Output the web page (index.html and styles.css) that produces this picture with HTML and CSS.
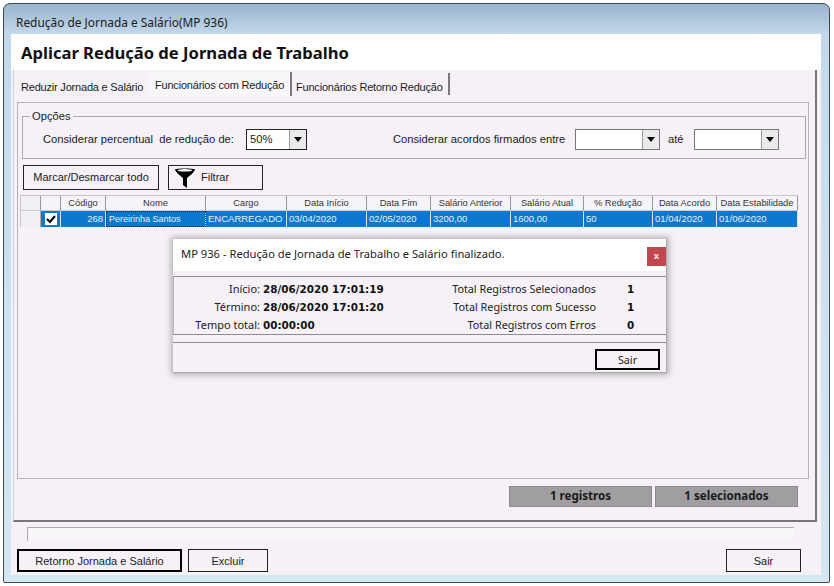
FILE: index.html
```html
<!DOCTYPE html>
<html lang="pt">
<head>
<meta charset="utf-8">
<title>Redução de Jornada e Salário</title>
<link rel="stylesheet" href="styles.css">
</head>
<body>
<div class="window">
  <div class="titlebar">Redução de Jornada e Salário(MP 936)</div>
  <div class="client">
    <div class="header"><h1>Aplicar Redução de Jornada de Trabalho</h1></div>
    <div class="workarea">
      <div class="tabs">
        <span class="tab t1">Reduzir Jornada e Salário</span>
        <span class="tab t2 active">Funcionários com Redução</span>
        <span class="tab t3">Funcionários Retorno Redução</span>
      </div>
      <div class="panel">
        <div class="group">
          <span class="legend">Opções</span>
          <span class="lbl l1">Considerar percentual&nbsp; de redução de:</span>
          <span class="combo c1"><span class="val">50%</span><span class="arrow"></span></span>
          <span class="lbl l2">Considerar acordos firmados entre</span>
          <span class="combo c2 soft"><span class="val"></span><span class="arrow"></span></span>
          <span class="lbl l3">até</span>
          <span class="combo c2 soft"><span class="val"></span><span class="arrow"></span></span>
        </div>
        <div class="actions">
          <button class="btn mark">Marcar/Desmarcar todo</button>
          <button class="btn filter">
            <svg width="22" height="22" viewBox="0 0 22 22"><path d="M1 2.5C1 1 21 1 21 2.5C21 4 17 8 13 11V21L9 18V11C5 8 1 4 1 2.5Z" fill="#000"/><ellipse cx="11" cy="3.3" rx="7.5" ry="1.3" fill="#fff"/></svg>
            <span class="filter-label">Filtrar</span>
          </button>
        </div>
        <div class="grid">
          <div class="row head">
            <span class="w-rh"></span><span class="w-ck"></span><span class="w-cod">Código</span><span class="w-nom">Nome</span><span class="w-car">Cargo</span><span class="w-di">Data Início</span><span class="w-df">Data Fim</span><span class="w-sa">Salário Anterior</span><span class="w-st">Salário Atual</span><span class="w-pc">% Redução</span><span class="w-da">Data Acordo</span><span class="w-de">Data Estabilidade</span>
          </div>
          <div class="row data">
            <span class="w-rh"></span><span class="w-ck"><i class="check"><svg width="10" height="10" viewBox="0 0 10 10"><path d="M1 5L4 8L9 2" fill="none" stroke="#000" stroke-width="2"/></svg></i></span><span class="w-cod num">268</span><span class="w-nom sel">Pereirinha Santos</span><span class="w-car">ENCARREGADO</span><span class="w-di">03/04/2020</span><span class="w-df">02/05/2020</span><span class="w-sa">3200,00</span><span class="w-st">1600,00</span><span class="w-pc">50</span><span class="w-da">01/04/2020</span><span class="w-de">01/06/2020</span>
          </div>
        </div>
        <div class="status">
          <span class="pill">1 registros</span>
          <span class="pill">1 selecionados</span>
        </div>
      </div>
    </div>
    <div class="progress"></div>
    <div class="footer">
      <button class="btn retorno">Retorno Jornada e Salário</button>
      <button class="btn excluir">Excluir</button>
      <button class="btn sair">Sair</button>
    </div>
  </div>
</div>

<div class="dialog">
  <div class="dlg-head">
    <span>MP 936 - Redução de Jornada de Trabalho e Salário finalizado.</span>
    <span class="close">x</span>
  </div>
  <div class="dlg-body">
    <span class="k">Início:</span><b>28/06/2020 17:01:19</b><span class="t">Total Registros Selecionados</span><b class="n">1</b>
    <span class="k">Término:</span><b>28/06/2020 17:01:20</b><span class="t">Total Registros com Sucesso</span><b class="n">1</b>
    <span class="k">Tempo total:</span><b>00:00:00</b><span class="t">Total Registros com Erros</span><b class="n">0</b>
  </div>
  <div class="dlg-foot"><button class="btn dlg-sair">Sair</button></div>
</div>
</body>
</html>
```
FILE: styles.css
```css
* { box-sizing: border-box; }
html, body { margin: 0; padding: 0; }
body { width: 834px; height: 586px; background: #fff; padding: 3px 4px 0 3px; overflow: hidden; font-family: "Liberation Sans", Arial, sans-serif; color: #1c1c1c; position: relative; }
.window { width: 827px; height: 580px; border: 1px solid #3d4a52; border-radius: 7px 7px 2px 2px; background: linear-gradient(#98b5d0 0, #c3d7e9 30px, #c6dcee 100px, #d5e6f3 100%); display: flex; flex-direction: column; }
.titlebar { height: 30px; flex: none; padding: 9px 0 0 12px; font: 11.9px/18px "Noto Sans", sans-serif; color: #1c1c1c; }
.client { flex: 1; margin: 0 8px 7px 7px; background: #f5f1f6; display: flex; flex-direction: column; min-height: 0; }
.header { height: 36px; flex: none; background: #fff; padding: 0 0 0 10px; }
h1 { margin: 0; font: bold 16.6px/37px "Noto Sans", sans-serif; color: #111; white-space: nowrap; }
.workarea { height: 452px; flex: none; margin: 0 4px 0 2px; border-right: 2px solid #777; border-bottom: 2px solid #777; border-left: 1px solid #c5d4e0; padding: 2px 6px 0 3px; display: flex; flex-direction: column; }
.tabs { height: 24px; flex: none; display: flex; font-size: 11px; letter-spacing: -0.2px; }
.tab { display: block; line-height: 30px; white-space: nowrap; }
.t1 { width: 132px; padding-left: 4px; }
.t2 { width: 143px; padding-left: 6px; line-height: 26px; background: #f9f6fa; border-right: 2px solid #777; }
.t3 { width: 158px; padding-left: 4px; border-right: 2px solid #777; height: 22px; margin-top: 1px; line-height: 28px; }
.panel { height: 377px; margin-top: 6px; flex: none; border: 1px solid #b5b2b6; padding: 13px 3px 0 4px; display: flex; flex-direction: column; }
.group { height: 43px; flex: none; position: relative; border: 1px solid #aaa; margin-right: -1px; display: flex; align-items: center; padding: 3px 0 0 20px; font-size: 11.2px; }
.legend { position: absolute; left: 7px; top: -7px; padding: 0 2px; background: #f5f1f6; line-height: 13px; }
.lbl { white-space: nowrap; }
.l1 { width: 203px; }
.l2 { width: 182px; margin-left: 86px; }
.l3 { width: 26px; margin-left: 8px; }
.combo { display: flex; height: 21px; background: #fff; border: 1px solid #222; }
.c1 { width: 61px; }
.c2 { width: 85px; }
.soft { border-color: #777; }
.val { flex: 1; padding-left: 3px; line-height: 19px; }
.arrow { width: 17px; border-left: 1px solid #999; background: #ece9ed; position: relative; }
.arrow::after { content: ""; position: absolute; left: 4px; top: 7px; border: 4px solid transparent; border-top: 5px solid #000; border-bottom: 0; }
.actions { height: 25px; margin: 6px 0 0 1px; flex: none; display: flex; gap: 9px; }
.btn { display: block; background: #f5f1f6; border: 1px solid #222; font: 11px "Liberation Sans", Arial, sans-serif; color: #1c1c1c; padding: 0; }
.mark { width: 136px; height: 25px; padding-bottom: 2px; }
.filter { width: 95px; height: 25px; display: flex; align-items: center; padding-left: 5px; gap: 5px; }
.filter-label { margin-top: -1px; }
.grid { margin: 5px 0 0 -2px; width: 778px; font-size: 9.3px; }
.row { display: flex; }
.row span { display: block; white-space: nowrap; overflow: hidden; flex: none; }
.head { height: 16px; border-top: 1px solid #c8c6c9; background: #f5f3f7; }
.head span { text-align: center; line-height: 15px; border-right: 1px solid #99979a; border-bottom: 1px solid #cfcdd0; color: #333; }
.data { height: 16px; background: #0a78cf; color: #e6f2fb; }
.data span { line-height: 16px; padding-left: 2px; border-right: 1px solid #d8e4ee; font-size: 9.5px; }
.data .sel { font-size: 9px; padding-left: 3px; }
.head .w-rh, .data .w-rh { background: #f1eff3; border-left: 1px solid #c8c6c9; }
.data .w-rh { border-right: 1px solid #aaa; }
.data .w-ck { padding: 2px 0 0 4px; }
.data .num { text-align: right; padding-right: 2px; }
.data .sel { outline: 1px dotted #0b2f55; outline-offset: -1px; }
.check { display: block; width: 12px; height: 12px; background: #fff; padding: 1px; }
.check svg { display: block; }
.w-rh { width: 21px; } .w-ck { width: 20px; } .w-cod { width: 45px; } .w-nom { width: 100px; } .w-car { width: 81px; } .w-di { width: 80px; } .w-df { width: 64px; } .w-sa { width: 80px; } .w-st { width: 73px; } .w-pc { width: 69px; } .w-da { width: 64px; } .w-de { width: 81px; }
.status { display: flex; justify-content: flex-end; gap: 3px; margin: 259px 7px 0 0; }
.pill { width: 143px; height: 21px; background: #a09ea1; border: 1px solid #8b898c; font: bold 11.6px/18px "Noto Sans", sans-serif; text-align: center; color: #1a1a1a; }
.progress { height: 14px; margin: 5px 27px 0 16px; flex: none; border-top: 1px solid #aaa; border-left: 1px solid #aaa; background: #f8f5f9; }
.footer { display: flex; margin: 8px 20px 0 6px; height: 23px; flex: none; }
.retorno { width: 165px; border-width: 2px; border-color: #000; }
.excluir { width: 80px; margin-left: 6px; }
.sair { width: 75px; margin-left: auto; }
.dialog { position: absolute; left: 173px; top: 239px; width: 494px; height: 134px; background: #f5f1f6; border-right: 1px solid #aaa; border-bottom: 1px solid #aaa; box-shadow: 0 0 6px 2px rgba(0,0,0,.28); display: flex; flex-direction: column; font: 10.8px "Noto Sans", sans-serif; color: #222; }
.dlg-head { height: 32px; background: #fff; padding: 6px 0 0 8px; flex: none; display: flex; justify-content: space-between; font-size: 11.2px; line-height: 18px; }
.close { width: 19px; height: 19px; margin-top: 2px; background: #c0474f; color: #f5dcdc; text-align: center; font: bold 9px/18px "DejaVu Sans", sans-serif; }
.dlg-body { margin-top: 5px; height: 59px; flex: none; padding-top: 2px; border-top: 1px solid #8d8b90; border-bottom: 1px solid #8d8b90; border-left: 1px solid #b5b3b7; display: grid; grid-template-columns: 88px 155px 179px 1fr; grid-auto-rows: 18px; align-content: center; align-items: center; line-height: 18px; }
.k { text-align: right; margin-right: 2px; white-space: nowrap; font-size: 11px; }
.dlg-body b { font-family: "DejaVu Sans", sans-serif; font-size: 10.4px; white-space: nowrap; padding-left: 1px; color: #111; }
.t { text-align: right; white-space: nowrap; }
.dlg-body .n { padding-left: 31px; }
.dlg-foot { margin-top: 7px; flex: 1; border-top: 1px solid #8d8b90; display: flex; justify-content: flex-end; padding: 6px 6px 0 0; }
.dlg-sair { width: 65px; height: 21px; border-width: 2px; border-color: #000; font-family: "Noto Sans", sans-serif; font-size: 10.8px; }
```
